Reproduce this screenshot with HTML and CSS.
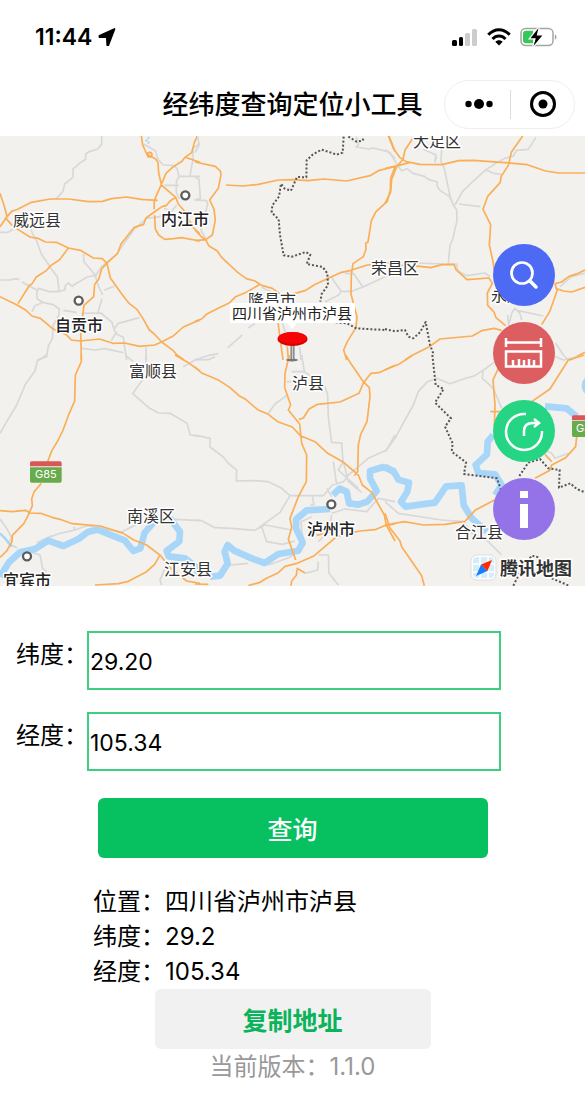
FILE: index.html
```html
<!DOCTYPE html>
<html lang="zh-CN">
<head>
<meta charset="utf-8">
<meta name="viewport" content="width=device-width, initial-scale=1">
<title>经纬度查询定位小工具</title>
<link rel="stylesheet" href="styles.css">
</head>
<body>
<header class="status-bar">
  <div class="clock">
    <time>11:44</time>
    <svg class="arrow-icon" viewBox="0 0 18 20" aria-hidden="true"><path d="M16.500 2 1.500 8.800 1.500 10H8.800L9.300 18.200H10.300z" stroke="#000" stroke-width="1.800" stroke-linejoin="round"/></svg>
  </div>
  <div class="indicators">
    <svg class="signal-icon" viewBox="0 0 26 18" aria-hidden="true">
      <rect x="0" y="12" width="5" height="6" rx="1.500"/><rect x="7" y="9" width="4" height="9" rx="1.500"/>
      <g fill="#ccc"><rect x="13" y="5" width="5" height="13" rx="1.500"/><rect x="20" y="1" width="5" height="17" rx="1.500"/></g>
    </svg>
    <svg class="wifi-icon" viewBox="0 0 24 18" aria-hidden="true"><g fill="none" stroke="#000" stroke-width="3"><path d="M1.300 6.800C7.500 0 16.500 0 22.700 6.800M5.500 11c3.800-3.900 9.200-3.900 13 0"/></g><path d="M8.300 13.700c2.200-2 5.200-2 7.400 0L12 17.600z"/></svg>
    <svg class="battery-icon" viewBox="0 0 37 20" aria-hidden="true">
      <rect x="1" y="1.500" width="32" height="17" rx="4.500" fill="none" stroke="#a5a5a5" stroke-width="1.500"/>
      <path d="M34.800 7.500c2.300.5 2.300 4.500 0 5z" fill="#a5a5a5"/>
      <path d="M6 3.700h7v12.600H6a3 3 0 0 1-3-3V6.700a3 3 0 0 1 3-3z" fill="#35c759"/>
      <path d="M18.500 1 10.500 11.200h5.300L13.500 19 22.300 8.600h-5.600z" stroke="#fff" stroke-width="2.500" paint-order="stroke"/>
    </svg>
  </div>
</header>

<div class="nav-bar">
  <h1 class="title">经纬度查询定位小工具</h1>
  <div class="capsule">
    <button type="button" class="capsule-btn" aria-label="更多"><svg width="30" height="12" viewBox="0 0 30 12"><circle cx="4.500" cy="6" r="3.200"/><circle cx="15" cy="6" r="5"/><circle cx="25.500" cy="6" r="3.200"/></svg></button>
    <button type="button" class="capsule-btn" aria-label="关闭"><svg width="28" height="28" viewBox="0 0 28 28"><circle cx="14" cy="14" r="11.500" fill="none" stroke="#000" stroke-width="3"/><circle cx="14" cy="14" r="4.500"/></svg></button>
  </div>
</div>

<main>
<section class="map" aria-label="地图">
<svg class="map-canvas" viewBox="0 136 585 450" preserveAspectRatio="xMidYMid slice">
  <g transform="translate(0 130) scale(.33333)">
    <g class="minor">
      <path d="M305 18V42L293 57 268 65 257 72V88L239 99 227 111 219 116V141L206 153 194 162 189 184 167 208M0 307H24L46 294 90 290 97 310 109 331 124 372 158 422 172 440 176 472 176 485 148 485 115 475 110 490 112 507 128 517 160 524 178 537 176 557 160 585 157 625 145 648 140 680 112 690M0 450 30 450 48 446 58 449M66 456 110 480M176 485 195 479 196 466 205 459 217 469 222 464 262 441 285 436 296 470 308 495M130 517 105 527 96 545M190 541 230 547M245 550 303 549 336 577 342 598 355 580 375 575 418 563M342 598 350 613 370 622 376 665 380 690M350 605 334 632M245 655 285 660 314 656 370 668M438 652V690M306 506 294 546M312 481 343 469M250 372 252 395 290 440M285 438 305 410 350 373 375 336 404 297 440 265 480 260M430 42 466 62 474 88 490 105 520 106 531 115 537 139 600 139M537 139 529 155V188L538 207M493 166H536M570 139 575 108 579 91V55L600 40M492 235 515 244 530 225M480 255 500 275"/>
    </g>
    <path class="river thin" d="M447 22 440 32 448 40" stroke-dasharray="5 4"/>
    <g class="road">
      <path d="M0 190 13 229 21 260 0 290M21 260 35 244 50 239 94 217 151 207H207L265 215 307 214 335 206 380 201 424 208 473 211M15 262 40 290 90 321 114 325 136 336 169 337 205 354 241 361 280 384 307 386 321 400 331 444 367 494 387 520 411 538 429 566 448 600 463 612 485 636 520 662 529 673 552 690M205 354 198 364 178 390 152 407 140 421 109 441 97 460 87 468 54 521M0 500 51 525 77 540 96 558 121 565 158 596 199 614 214 630 242 633 299 627 338 640 374 639 419 649 464 645 485 636 521 617 550 591 576 580 600 570M244 690 242 600 249 550 252 526 281 500 284 463 296 448 305 417 320 400 353 370 363 342 379 322 403 292 431 283 438 264 463 246 486 230 500 226 510 213 527 202M424 18 428 45 440 72 467 87 474 98 476 129 484 163 463 211 462 238M464 256 466 297 476 315 494 328 520 326 545 323 600 333M484 163 498 130 520 110 546 94 555 82 575 68 583 38 592 18M555 82 600 97M482 163 527 202 535 222 556 246 577 290 600 312"/>
      <circle cx="449" cy="74" r="7"/>
    </g>
    <circle class="city" cx="236" cy="512" r="12"/><circle class="city" cx="556" cy="196" r="12"/>
  </g>
  <g transform="translate(195 130) scale(.33333)">
    <g class="minor"><path d="M8 18 12 46 0 68M0 141 12 147 16 205 0 210 35 212 38 223 18 300 32 327M484 20 490 45 483 51 521 57 535 54 578 65 600 85M410 440 416 452 424 463 438 484 432 494 390 516M438 484H470L504 471 560 445 600 427M450 430 476 431 504 471M200 472 247 495M262 580 269 600 274 650M160 594 180 580M98 654 142 615M0 690 41 676 70 671M314 650 318 690"/></g>
    <g class="road">
      <path d="M0 96 61 109 76 123 78 134 70 175 44 210 57 238 61 270 52 315 32 329 0 332M0 300 20 321 32 329 41 347 67 363 78 380 90 392 98 399 128 427 154 446 180 453 200 466 232 475 255 492M0 574 20 567 34 553 77 531 104 518 122 500 154 487 193 464M93 165 143 168 190 163 250 150 294 149 339 152 386 147 455 153 525 137 550 122 600 109M582 18 600 64M600 110 587 145 586 180 577 214 543 245 529 272 519 336 512 340 513 358 505 380 474 401 469 435 468 492 486 560 483 593 457 635 446 660 455 690M290 493 332 481 357 465 403 443 436 428 468 421 517 405 600 396M249 578 252 600 264 690M277 650 280 690"/>
    </g>
    <path class="border" d="M446 20 443 68 425 74 402 66 380 59 354 73 335 91 334 142 306 141 288 182 269 176 258 161 252 200 232 226 230 247 251 268 255 315 266 376 291 380 332 366 346 374 335 402 383 411 397 430 399 465 380 492 376 515M460 20 485 35 503 32 507 20M422 577 456 580 484 595 570 600"/>
  </g>
  <g transform="translate(385 130) scale(.33333)">
    <g class="minor"><path d="M0 60 15 68 40 110 50 122 66 116 84 130 119 139 130 148 157 156 156 168 166 182 193 199 205 225 215 240 216 272 202 332 195 345 190 400M170 58 168 95 178 115 195 199 207 230M115 58 153 75 150 95 155 80M210 225 232 185 260 158 303 119 335 98 360 85 385 78 394 61 430 58 453 22M303 119 325 130 350 133M222 222 286 230M100 399 195 403 215 402 218 422 246 437 300 429 315 440M368 555 371 587 380 550 390 535 405 550 410 570M400 542 475 558M512 640 535 675 550 690M525 470 560 440 600 430"/></g>
    <g class="road"><path d="M10 18 26 57 44 82 63 95 105 103 170 104 221 92 264 91 360 98 427 104 482 123 521 129H600M84 24 60 60 54 88 34 112 20 148 17 186 0 220M0 116 42 106 76 97M413 18 379 67 370 106 348 140 346 157 308 199 294 238 317 284 313 345 323 390 328 420M0 397 43 405 105 409 137 413 171 404 207 403 213 419 246 449 312 444 322 460 307 489 308 526 327 546 333 563 362 587M600 420 580 430 552 439 530 456 510 461 516 483 494 545 470 584M516 476 535 483 560 486 600 472M60 690 85 674 133 650 165 627 262 618 290 602 327 595 350 601M555 690 600 667"/></g>
    <path class="border" d="M0 597 30 604 60 600 70 620 85 625 105 607 122 576 135 645 147 675"/>
  </g>
  <g transform="translate(0 355) scale(.33333)">
    <g class="minor"><path d="M140 0 112 18 105 48 76 88 50 150 17 205 0 235M375 0 400 20M438 0V62L416 90 398 116 449 160 476 174 510 175 561 205 571 240 600 244M550 35 590 12M0 492 20 520 35 548 25 565 52 580M140 550 180 535 225 525 222 515M225 525 260 512 365 531 410 508 460 490 600 497M90 590 120 600 128 640 140 650M110 563 155 542M495 640 480 675 485 690"/></g>
    <g class="river"><path d="M0 665 27 622 60 592 105 582 144 557 190 573 235 552 265 530 293 524 330 539 374 556 400 588 421 580 434 533 463 500M510 490 540 530 538 559 500 588 506 604 555 610 600 645"/><path class="thin" d="M0 535 15 550 35 575"/></g>
    <g class="road"><path d="M244 0V20L226 60 224 138 206 179 188 228 173 258 156 286 142 322M124 385 103 409 95 431 97 452 84 482 72 505 37 541 36 560 20 588 0 607M0 467 35 470 77 466 90 474 122 475 156 487 180 493 217 506 301 513 370 535 401 555 440 570 481 601 510 638 560 678 600 685M481 598 464 628 437 652 385 679 355 686 285 690M525 0 560 20 600 48"/></g>
    <circle class="city" cx="81" cy="604" r="12"/>
    <path d="M90 324q0-5 5-5h85q5 0 5 5v10H90z" fill="#d95757"/><path d="M90 337h95v41q0 5-5 5H95q-5 0-5-5z" fill="#68ab4d"/>
  </g>
  <g transform="translate(195 355) scale(.33333)">
    <g class="minor"><path d="M0 14 40 14 60 5M320 0 328 50 390 95 398 120 400 185 410 262 440 264 444 320M290 50H330M275 80H295M220 175 240 147 280 118M0 240 45 250V276L85 306 100 325 125 345 124 378 180 377 220 380 260 400 285 422H385L412 390 446 380 460 360 520 310 575 285 600 240M285 422 255 472 180 526 110 520 60 518 20 497 0 495M190 520 210 510 290 525M200 515 215 560 262 568 300 558M352 425 357 450 345 450M415 320 425 390M445 320 460 380 500 412M445 320 430 345 490 400M395 400 410 425M410 475 450 462 515 470 550 430 600 440M410 480 400 530 370 560M45 672 105 630 160 625M220 630 285 607 330 570 320 530 318 500 350 485M370 600 400 600 402 655 430 690M370 620 368 645 330 655"/></g>
    <g class="river"><path d="M0 645 10 650M45 665 75 662 98 626 89 590 98 570 116 586 170 610 209 624 250 597 310 587 323 562 303 520 303 493 335 466 405 462M414 420 434 401 455 410 462 445 490 449 517 440 545 408 525 370 525 348 565 336 600 350"/></g>
    <g class="road"><path d="M0 36 20 54 72 76 105 98 132 122 152 133 188 164 220 178 248 200 292 216 316 242 360 260 398 295 443 320 490 360 502 390 530 412 568 480 574 510 600 558M283 0 270 55 269 98 287 150 280 165 314 207 320 265 335 300 334 380 310 425 285 490 290 518 280 552 302 615M312 193 325 189 342 162 368 148 435 141 492 115 505 84 528 55 555 52 600 31M452 0 467 25 505 80 523 98 525 125 516 200 497 238 490 270 488 350 478 362M160 692 195 682 216 669 250 653 270 634 303 626 355 604 425 545 455 536 495 528 540 524 568 512 600 507M365 541 420 527M305 639 330 654M306 643 304 661 290 678 288 692M0 687 40 688"/></g>
    <circle class="city" cx="409" cy="448" r="12"/>
  </g>
  <g transform="translate(385 355) scale(.33333)">
    <g class="minor"><path d="M0 290 30 250 60 195 85 150 100 110 127 80 155 70 195 86 235 72 270 62 300 42 330 20M294 45 292 70 325 100 350 160M0 440 40 475 170 495 235 500 260 535 310 560 350 600M500 0 535 15 580 5M480 285 500 295 510 310 550 295"/></g>
    <g class="river"><path d="M0 335 28 352 40 374 72 383 67 410 48 440 62 455 110 448 150 443 183 394 230 391 236 450 260 490 305 530M325 240 308 260 306 298 272 330 280 354 330 358 350 390 330 420M480 154 545 160 575 185"/></g>
    <circle cx="622" cy="92" r="32" fill="#a8d6f9"/>
    <g class="road"><path d="M0 44 45 26 83 0M0 475 15 519 45 558 50 575 110 662 118 692M0 510 58 500 116 510 180 508 240 499 270 466 330 434M598 0 550 15 495 102 440 140M340 40 324 75 330 150 328 215M316 170H350M575 245 572 275 542 308 500 330 495 346 450 370M480 298 500 320"/></g>
    <path class="border" d="M142 0 152 90 176 102 150 143 198 190 180 215 203 265 200 290 243 322 237 357 300 365 336 370 348 405M403 363 430 323 465 312 490 340 524 345 522 398 556 385 575 402 600 412M385 692 405 652 440 602 460 607M500 670 552 692"/>
    <path d="M561 186q0-5 5-5h40v15h-45z" fill="#d95757"/><path d="M561 198h45v48h-40q-5 0-5-5z" fill="#68ab4d"/>
  </g>

  <g class="place">
    <text x="13" y="226">威远县</text><text x="371" y="274">荣昌区</text><text x="413" y="147">大足区</text>
    <text x="248" y="306">隆昌市</text><text x="491" y="301">永川区</text><text x="129" y="377">富顺县</text>
    <text x="292" y="389">泸县</text><text x="127" y="522">南溪区</text><text x="164" y="575">江安县</text><text x="455" y="538">合江县</text>
  </g>
  <g class="place major">
    <text x="161" y="225">内江市</text><text x="55" y="331">自贡市</text><text x="307" y="535">泸州市</text><text x="3" y="586">宜宾市</text>
  </g>
  <g class="shield"><text x="35" y="478">G85</text><text x="576" y="432">G85</text></g>

  <g>
    <path class="callout" d="M230 303h125v20h-58l-5 6-5-6h-57z"/>
    <text class="pin-label" x="232" y="319">四川省泸州市泸县</text>
    <ellipse cx="292" cy="360" rx="6" ry="1.500" fill="#777"/>
    <path d="M292.500 344v16" stroke="#777" stroke-width="4"/><path d="M292.500 344v15" stroke="#ccc" stroke-width="1.500"/>
    <ellipse cx="292.500" cy="339" rx="15" ry="7" fill="#d90000"/><ellipse cx="292.500" cy="338" rx="14" ry="6" fill="#f50505"/>
  </g>
  <g>
    <rect x="471" y="555" width="25" height="25" rx="6" fill="#fff" stroke="#ddd"/>
    <rect x="473" y="557" width="21" height="21" rx="4" fill="#d5edfa"/>
    <path d="M480 557v21M488 557v21M473 564h21M473 572h21" stroke="#fff" stroke-width="1.500"/>
    <path d="M476 576 481 564.500 487.500 571z" fill="#147eff"/><path d="M492 560 481 564.500 487.500 571z" fill="#ff2b00"/>
    <text class="brand" x="500" y="575">腾讯地图</text>
  </g>
</svg>
<div class="tools">
  <button type="button" class="tool search" aria-label="搜索"><svg viewBox="0 0 62 62"><g fill="none" stroke="#fff" stroke-width="2.700" stroke-linecap="round"><circle cx="29" cy="29" r="10.500"/><path d="m37 37 6 6" stroke-width="3.500"/></g></svg></button>
  <button type="button" class="tool measure" aria-label="测距"><svg viewBox="0 0 62 62"><path d="M13 16v9M48 16v9M13 20.500h35M13 29.500h35v15H13zM20 44v-6M26 44v-7M31 44v-6M36 44v-7M41 44v-6" fill="none" stroke="#fff" stroke-width="2.500"/></svg></button>
  <button type="button" class="tool share" aria-label="分享"><svg viewBox="0 0 62 62"><g fill="none" stroke="#fff" stroke-width="2.500"><path d="M33 14A18 18 0 1 0 49 31M31 36V31Q31 23 40 23h6M41 19l5 4-5 4"/></g></svg></button>
  <button type="button" class="tool info" aria-label="信息"><svg viewBox="0 0 62 62"><path d="M27 13h8v7h-8zM27 26h8v24h-8z" fill="#fff"/></svg></button>
</div>
</section>

<form class="query">
  <div class="field"><label for="lat">纬度：</label><input id="lat" type="text" value="29.20"></div>
  <div class="field"><label for="lng">经度：</label><input id="lng" type="text" value="105.34"></div>
  <button type="button" class="btn primary">查询</button>
</form>

<section class="result">
  <p>位置：四川省泸州市泸县</p>
  <p>纬度：29.2</p>
  <p>经度：105.34</p>
</section>
<button type="button" class="btn secondary">复制地址</button>
</main>
<footer class="version">当前版本：1.1.0</footer>
</body>
</html>
```
FILE: styles.css
```css
* { box-sizing: border-box; }
body { margin: 0; background: #fff; color: #000; font-family: Inter, "Noto Sans CJK SC", sans-serif; font-size: 24px; }
button { font: inherit; color: inherit; border: 0; padding: 0; margin: 0; background: none; }
svg { display: block; }

.status-bar { display: flex; justify-content: space-between; align-items: center; height: 74px; padding: 0 28px 0 35px; }
.clock { display: flex; align-items: center; gap: 6px; font-size: 23px; font-weight: 600; }
.arrow-icon { width: 18px; height: 20px; }
.indicators { display: flex; align-items: center; gap: 9px; }
.signal-icon { width: 26px; height: 18px; }
.wifi-icon { width: 24px; height: 18px; }
.battery-icon { width: 37px; height: 20px; }

.nav-bar { display: grid; grid-template-columns: 1fr auto 1fr; align-items: center; height: 62px; padding: 0 10px 2px; }
.title { grid-column: 2; margin: 0; padding-top: 2px; font-size: 26px; line-height: 36px; font-weight: 500; }
.capsule { justify-self: end; display: flex; align-items: center; width: 131px; height: 49px; border: 1px solid #eee; border-radius: 25px; }
.capsule-btn { flex: 1; display: flex; justify-content: center; align-items: center; height: 29px; padding-left: 2px; }
.capsule-btn + .capsule-btn { padding-left: 0; border-left: 1px solid #ddd; }

.map { position: relative; height: 450px; background: #f2f1ee; overflow: hidden; }
.map-canvas { width: 100%; height: 100%; }
.minor, .road, .river, .border { fill: none; stroke-linejoin: round; }
.minor { stroke: #d8d8d8; stroke-width: 5; }
.road { stroke: #fbae55; stroke-width: 5; }
.river { stroke: #a8d6f9; stroke-width: 20; }
.river .thin, .river.thin { stroke-width: 7; }
.border { stroke: #555; stroke-width: 6; stroke-dasharray: 6 6; }
.city { fill: #fff; stroke: #5c5c5c; stroke-width: 7; }
.place { font-size: 16px; fill: #333; stroke: #fff; stroke-width: 3px; stroke-linejoin: round; paint-order: stroke; }
.major { font-weight: 500; fill: #222; }
.shield { font-size: 11px; fill: #fff; }
.callout { fill: #fff; }
.pin-label { font-size: 15px; fill: #222; }
.brand { font-size: 18px; font-weight: 700; fill: #333; stroke: #fff; stroke-width: 3px; paint-order: stroke; }
.tools { position: absolute; top: 108px; right: 30px; display: flex; flex-direction: column; gap: 16px; }
.tool { width: 62px; height: 62px; border-radius: 50%; }
.search { background: #4d6af5; }
.measure { background: #dd5e60; }
.share { background: #26d584; }
.info { background: #9473e8; }

.query { padding: 45px 16px 0; }
.field { display: grid; grid-template-columns: 71px minmax(0, 414px); margin-bottom: 22px; }
.field label { white-space: nowrap; line-height: 48px; }
.field input { width: 100%; height: 59px; padding: 2px 1px 0; border: 2px solid #3dce83; border-radius: 0; background: #fff; color: #000; font: inherit; font-size: 23px; }
.btn { display: block; height: 60px; border-radius: 6px; font-size: 25px; font-weight: 500; }
.primary { width: 390px; max-width: 100%; margin: 27px auto 0; background: #07c160; color: #fff; }
.result { padding: 26px 16px 0 93px; }
.result p { margin: 0; line-height: 35px; }
.secondary { width: 276px; margin: 0 auto; background: #f1f1f1; color: #0bb35a; font-weight: 700; }
.version { padding-bottom: 24px; color: #999; text-align: center; line-height: 36px; }
```
